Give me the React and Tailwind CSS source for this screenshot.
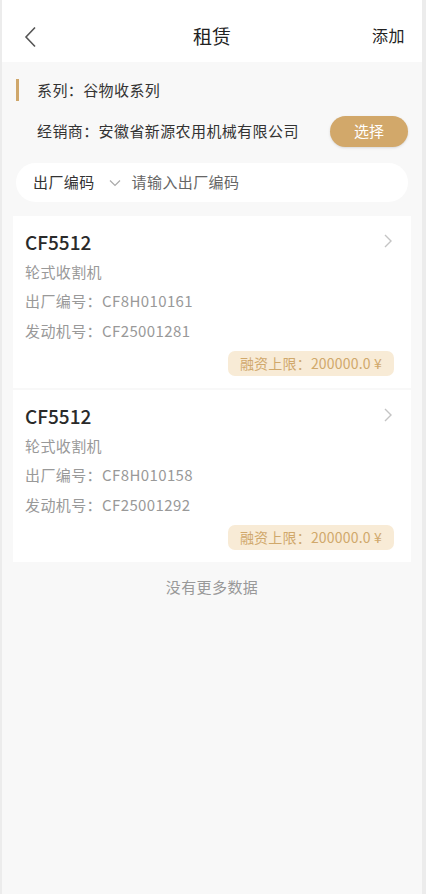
import React from 'react';

const cards = [
  { model: 'CF5512', type: '轮式收割机', serial: 'CF8H010161', engine: 'CF25001281', limit: '200000.0' },
  { model: 'CF5512', type: '轮式收割机', serial: 'CF8H010158', engine: 'CF25001292', limit: '200000.0' },
];

const ChevronRight = () => (
  <svg width="10" height="16" viewBox="0 0 10 16" fill="none" stroke="#c4c4c4" strokeWidth="1.4">
    <path d="M2 2l6 6-6 6" />
  </svg>
);

const App = () => {
  return (
    <div
      className="min-h-[894px] bg-[#ececec] pl-[2px] pr-[4px]"
      style={{ fontFamily: '"Noto Sans CJK SC", "Noto Sans", sans-serif' }}
    >
      <div className="min-h-[894px] bg-[#f8f8f8]">
        {/* header */}
        <div className="h-[62px] bg-white flex items-center px-[20px] relative">
          <svg width="13" height="22" viewBox="0 0 13 22" fill="none" stroke="#555" strokeWidth="1.6" className="ml-[2px] mt-[12px]">
            <path d="M11 1.5L2 11l9 9.5" />
          </svg>
          <div className="absolute left-0 right-0 top-[23px] text-center text-[19px] text-[#222] leading-[26px]">租赁</div>
          <div className="ml-auto text-[16px] text-[#222] mt-[8px] mr-[-3px] tracking-[0.5px]">添加</div>
        </div>

        {/* series */}
        <div className="flex items-center mt-[17px] h-[22px] pl-[14px]">
          <div className="w-[3px] h-[22px] bg-[#cfa76b]" />
          <div className="ml-[18px] text-[15px] text-[#333] tracking-[0.4px]">系列：谷物收系列</div>
        </div>

        {/* dealer */}
        <div className="flex items-center mt-[15px] pl-[35px] pr-[14px]">
          <div className="text-[15px] text-[#333] tracking-[0.4px]">经销商：安徽省新源农用机械有限公司</div>
          <button className="ml-auto w-[78px] h-[31px] rounded-full bg-[#d2a86a] text-white text-[15px] shadow-sm">选择</button>
        </div>

        {/* search */}
        <div className="mx-[14px] mt-[16px] h-[39px] bg-white rounded-full flex items-center pl-[17px]">
          <span className="text-[15px] text-[#333] tracking-[0.4px]">出厂编码</span>
          <svg width="12" height="8" viewBox="0 0 12 8" fill="none" stroke="#aaa" strokeWidth="1.2" className="ml-[14px]">
            <path d="M1 1.5l5 5 5-5" />
          </svg>
          <span className="ml-[11px] text-[15px] text-[#666] tracking-[0.4px]">请输入出厂编码</span>
        </div>

        {/* list */}
        <div className="mx-[11px] mt-[14px] flex flex-col gap-[2px]">
          {cards.map((c, i) => (
            <div key={i} className="bg-white px-[12px] pt-[13px] pb-[12px]">
              <div className="flex items-center justify-between">
                <div className="text-[19px] font-medium text-[#2a2a2a] leading-[26px]">{c.model}</div>
                <div className="mr-[6px] mt-[-3px]"><ChevronRight /></div>
              </div>
              <div className="mt-[7px] text-[15px] text-[#999] leading-[20px] tracking-[0.4px]">{c.type}</div>
              <div className="mt-[9px] text-[15px] text-[#999] leading-[20px] tracking-[0.4px]">出厂编号：{c.serial}</div>
              <div className="mt-[10px] text-[15px] text-[#999] leading-[20px] tracking-[0.4px]">发动机号：{c.engine}</div>
              <div className="flex justify-end mt-[10px] pr-[5px]">
                <div className="h-[25px] w-[166px] justify-center rounded-[7px] bg-[#f8ebd6] text-[#d0a86b] text-[14px] flex items-center tracking-[0.2px]">
                  融资上限：{c.limit} ¥
                </div>
              </div>
            </div>
          ))}
        </div>

        <div className="mt-[14px] text-center text-[15px] text-[#999] tracking-[0.4px]">没有更多数据</div>
      </div>
    </div>
  );
};

export default App;
